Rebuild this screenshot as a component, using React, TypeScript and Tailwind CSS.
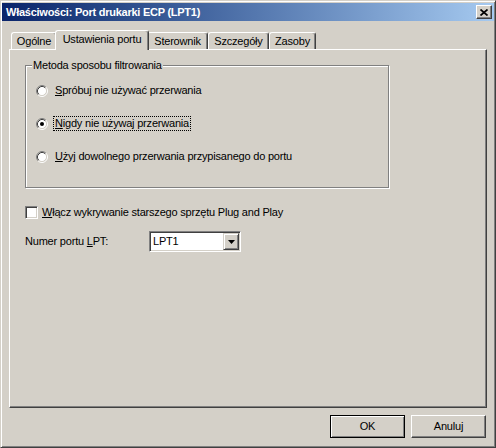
import React from 'react';

const raised =
    'border border-t-white border-l-white border-r-[#404040] border-b-[#404040] shadow-[inset_-1px_-1px_#808080]';
const sunken =
    'border border-t-[#808080] border-l-[#808080] border-r-white border-b-white shadow-[inset_1px_1px_#404040,inset_-1px_-1px_#d4d0c8]';

const tabs = ['Ogólne', 'Ustawienia portu', 'Sterownik', 'Szczegóły', 'Zasoby'];
const tabWidths = ['w-[46px]', 'w-[94px]', 'w-[61px]', 'w-[61px]', 'w-[47px]'];

// Klasyczny przycisk opcji 12x12
const Radio = ({ checked }: { checked?: boolean }) => (
    <svg width="12" height="12" viewBox="0 0 12 12" className="shrink-0">
        <circle cx="6" cy="6" r="4.5" fill="#fff" />
        <path d="M2.11 9.89A5.5 5.5 0 0 1 9.89 2.11" fill="none" stroke="#808080" />
        <path d="M9.89 2.11A5.5 5.5 0 0 1 2.11 9.89" fill="none" stroke="#fff" />
        <path d="M2.82 9.18A4.5 4.5 0 0 1 9.18 2.82" fill="none" stroke="#404040" />
        <path d="M9.18 2.82A4.5 4.5 0 0 1 2.82 9.18" fill="none" stroke="#d4d0c8" />
        {checked && <circle cx="6" cy="6" r="2" fill="#000" />}
    </svg>
);

const options = [
    { key: 'S', rest: 'próbuj nie używać przerwania' },
    { key: 'N', rest: 'igdy nie używaj przerwania', checked: true },
    { key: 'U', rest: 'żyj dowolnego przerwania przypisanego do portu' },
];

export default function App() {
    return (
        <div className="w-[496px] h-[448px] flex flex-col bg-[#d4d0c8] border border-t-[#d4d0c8] border-l-[#d4d0c8] border-r-[#404040] border-b-[#404040] shadow-[inset_1px_1px_#fff,inset_-1px_-1px_#808080] pt-[2px] px-[1px] text-[11px] leading-[13px] tracking-[-0.2px] text-black font-['Liberation_Sans',Arial,sans-serif] overflow-hidden">
            {/* Title bar */}
            <div className="h-[18px] flex items-center justify-between pl-[4px] pr-[2px] bg-gradient-to-r from-[#0a246a] to-[#a6caf0]">
                <span className="text-white font-bold text-[11px] tracking-[-0.25px]">Właściwości: Port drukarki ECP (LPT1)</span>
                <div className={`w-[16px] h-[14px] bg-[#d4d0c8] flex items-center justify-center ${raised}`}>
                    <svg width="8" height="7" viewBox="0 0 8 7">
                        <path d="M0.5 0.5L7.5 6.5M7.5 0.5L0.5 6.5" stroke="#000" strokeWidth="1.7" />
                    </svg>
                </div>
            </div>

            {/* Tabs */}
            <div className="mt-[9px] ml-[9px] h-[19px] flex items-start">
                {tabs.map((t, i) =>
                    i === 1 ? (
                        <div
                            key={t}
                            className={`relative z-10 -mx-[2px] h-[20px] ${tabWidths[i]} bg-[#d4d0c8] flex items-center justify-center pb-[3px] rounded-t-[3px] border-l border-t border-r border-l-white border-t-white border-r-[#404040] shadow-[inset_-1px_0_#808080]`}
                        >
                            {t}
                        </div>
                    ) : (
                        <div
                            key={t}
                            className={`mt-[2px] h-[17px] ${tabWidths[i]} flex items-center justify-center pt-[1px] rounded-t-[3px] border-l border-t border-r border-l-white border-t-white border-r-[#404040] shadow-[inset_-1px_0_#808080]`}
                        >
                            {t}
                        </div>
                    )
                )}
            </div>

            {/* Panel */}
            <div className="ml-[7px] w-[478px] h-[359px] border border-t-white border-l-white border-r-[#404040] border-b-[#404040] shadow-[inset_-1px_-1px_#808080] pt-[15px] pl-[15px]">
                <div className="relative w-[364px] h-[123px] border border-[#808080] shadow-[1px_1px_0_#fff,inset_1px_1px_0_#fff] pt-[17px] pl-[10px]">
                    <span className="absolute left-[6px] -top-[7px] px-[1px] bg-[#d4d0c8]">Metoda sposobu filtrowania</span>
                    <div className="flex flex-col gap-[18px]">
                        {options.map(o => (
                            <div key={o.key} className="flex items-center gap-[5px] h-[15px]">
                                <Radio checked={o.checked} />
                                <span
                                    className={`px-[1px] h-[15px] flex items-center border border-dotted ${o.checked ? 'border-black' : 'border-transparent'}`}
                                >
                                    <span>
                                        <u>{o.key}</u>
                                        {o.rest}
                                    </span>
                                </span>
                            </div>
                        ))}
                    </div>
                </div>

                {/* Plug and Play */}
                <div className="mt-[18px] flex items-center gap-[4px]">
                    <div className={`w-[13px] h-[13px] bg-white ${sunken}`} />
                    <span>
                        <u>W</u>łącz wykrywanie starszego sprzętu Plug and Play
                    </span>
                </div>

                {/* LPT port */}
                <div className="mt-[12px] flex items-center">
                    <span className="w-[124px]">
                        Numer portu <u>L</u>PT:
                    </span>
                    <div className={`w-[92px] h-[21px] bg-white flex p-[1px] ${sunken}`}>
                        <span className="flex-1 flex items-center pl-[2px]">LPT1</span>
                        <div className="w-[16px] h-full bg-[#d4d0c8] flex items-center justify-center border border-t-[#d4d0c8] border-l-[#d4d0c8] border-r-[#404040] border-b-[#404040] shadow-[inset_1px_1px_#fff,inset_-1px_-1px_#808080]">
                            <svg width="7" height="4" viewBox="0 0 7 4">
                                <path d="M0 0H7L3.5 4Z" fill="#000" />
                            </svg>
                        </div>
                    </div>
                </div>
            </div>

            {/* Buttons */}
            <div className="mt-[7px] flex justify-end gap-[6px] pr-[8px]">
                <button className="w-[75px] h-[23px] border border-black shadow-[inset_1px_1px_#fff,inset_-1px_-1px_#808080] bg-[#d4d0c8]">
                    OK
                </button>
                <button className={`w-[75px] h-[23px] bg-[#d4d0c8] ${raised}`}>Anuluj</button>
            </div>
        </div>
    );
}
